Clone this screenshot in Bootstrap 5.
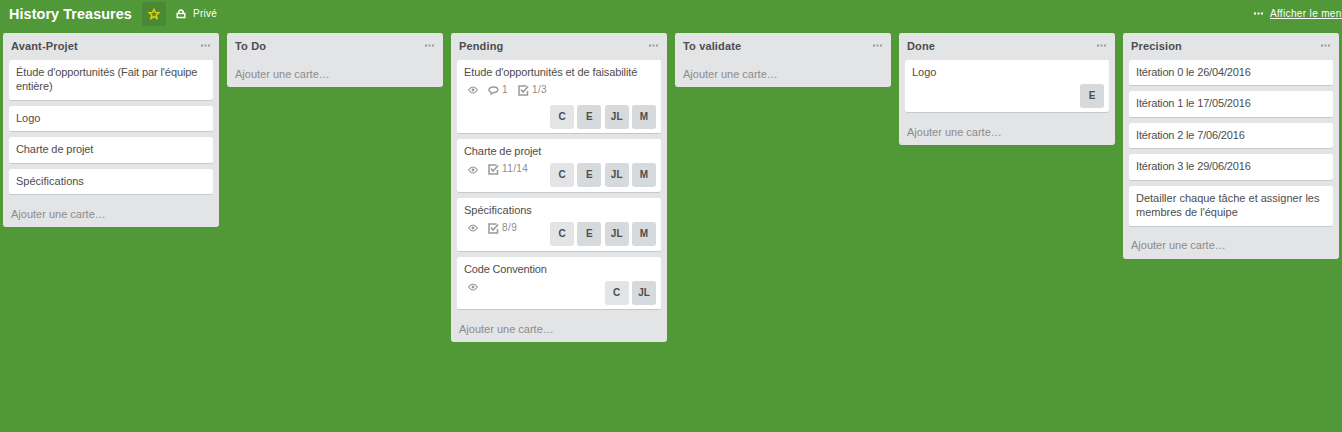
<!DOCTYPE html>
<html lang="fr">
<head>
<meta charset="utf-8">
<meta name="viewport" content="width=device-width, initial-scale=1">
<title>History Treasures</title>
<link href="https://cdn.jsdelivr.net/npm/bootstrap@5.3.0/dist/css/bootstrap.min.css" rel="stylesheet">
<style>
body{height:100vh;background:#519839;color:#4d4d4d;font:11px/14.4px "Liberation Sans",Arial,sans-serif}
svg{display:block;flex:none}
.board-header{height:27px;padding-left:9px;font-size:10px;color:#fff}
.board-title{font-size:14.4px;line-height:20px;letter-spacing:.08px;width:123px}
.star-btn{width:24px;height:24px;background:#498933;border-radius:2px;margin:0 10px}
.private{margin-left:7px;padding-top:1px;letter-spacing:.25px}
.menu-link{margin-right:-5.6px;gap:7px;letter-spacing:.35px;padding-top:1px}
.menu-link svg{margin-top:-1px}
.lists{gap:8px;padding:0 3px;margin-top:6px}
.board-list{width:216px;background:#e2e4e6;border-radius:2.4px}
.list-head{height:26.8px;padding:0 9px 0 8px;color:#4d4d4d}
.list-head h2{font-size:11px;line-height:14px;letter-spacing:.15px}
.list-head svg{margin-top:-2px;color:#999}
.list-cards{padding:0 6px;gap:5.1px}
.task{background:#fff;border-radius:2.4px;border-bottom:1px solid #c6c8ca;padding:5.2px 5px 5.8px 7px;letter-spacing:-.1px}
.task.loose{letter-spacing:0}
.task.tight{letter-spacing:-.16px}
.add-card{color:#8c8c8c;padding:11.9px 8px 5.7px}
.board-list.blank .add-card{padding-top:7.3px}
.task.people{padding-bottom:4.7px}
.info{height:28.4px;padding-left:4px}
.info .members{padding-top:4.5px}
.info.stacked{height:48.9px}
.info.stacked .members{padding-top:7.6px}
.marks{height:14px;margin-top:4px;color:#8c8c8c;font-size:10px;gap:10px;letter-spacing:.4px}
.marks span{gap:3px}
.members{gap:3.3px;letter-spacing:0}
.member{width:24px;height:24px;border-radius:2.4px;background:#d6dadc;font-weight:700;font-size:10px;color:#4d4d4d;padding-top:1px}
.member.pale{background:#e2e4e6}
</style>
</head>
<body class="overflow-hidden">
<svg width="0" height="0" class="position-absolute">
<symbol id="eye" viewBox="0 0 10 8"><path d="M.6 4Q5-2 9.400 4Q5 10 .6 4Z" fill="none" stroke="#999" stroke-width="1.200"/><circle cx="5" cy="4" r="1.400" fill="#999"/></symbol>
<symbol id="talk" viewBox="0 0 11 9"><path d="M3.200 6.300C-.6 5 .6 1 5.500 1C11.300 1 11.300 6.500 5.700 6.500L3 8.200Z" fill="none" stroke="#999" stroke-width="1.400" stroke-linejoin="round"/></symbol>
<symbol id="check" viewBox="0 0 11 11"><path d="M8.500 1H1V10H9.500V6M3 4.500L5 7L10.200 1.600" fill="none" stroke="#999" stroke-width="1.500"/></symbol>
<symbol id="dots" viewBox="0 0 9 3"><path d="M0 .5H2V2.500H0ZM3.500 .5H5.500V2.500H3.500ZM7 .5H9V2.500H7Z" fill="currentColor"/></symbol>
</svg>
<header class="board-header d-flex align-items-center">
<h1 class="board-title fw-bold m-0 text-nowrap">History Treasures</h1>
<div class="star-btn d-flex align-items-center justify-content-center"><svg width="12" height="12" viewBox="0 0 12 12"><path d="M6 1.500L7.400 4.400L10.800 4.700L8.200 7L9 10.400L6 8.600L3 10.400L3.800 7L1.200 4.700L4.600 4.400Z" fill="none" stroke="#e6d00d" stroke-width="1.500"/></svg></div>
<svg width="10" height="10" viewBox="0 0 10 10"><path d="M1.200 4.500H8.800V8.500H1.200ZM2.600 4.500Q2.600 1 5 1T7.400 4.500" fill="none" stroke="#fff" stroke-width="1.400"/></svg>
<span class="private">Privé</span>
<div class="menu-link ms-auto d-flex align-items-center text-nowrap"><svg width="9" height="3"><use href="#dots"/></svg><span class="text-decoration-underline">Afficher le menu</span></div>
</header>
<main class="lists d-flex align-items-start" id="board"></main>
<script>
const lists = [
 ["Avant-Projet", [["Étude d'opportunités (Fait par l'équipe entière)"],["Logo"],["Charte de projet"],["Spécifications"]]],
 ["To Do", []],
 ["Pending", [
  ["Etude d'opportunités et de faisabilité", {talk:"1", check:"1/3"}, ["C","E","JL","M"], true],
  ["Charte de projet", {check:"11/14"}, ["C","E","JL","M"]],
  ["Spécifications", {check:"8/9"}, ["C","E","JL","M"]],
  ["Code Convention", {}, ["C","JL"]]]],
 ["To validate", []],
 ["Done", [["Logo", null, ["E"]]]],
 ["Precision", [["Itération 0 le 26/04/2016"],["Itération 1 le 17/05/2016"],["Itération 2 le 7/06/2016"],["Itération 3 le 29/06/2016"],["Detailler chaque tâche et assigner les membres de l'équipe"]]]
];
const icon = (n,w,h) => `<svg width="${w}" height="${h}"><use href="#${n}"/></svg>`;
const fit = t => /^(Spéc|Logo|Detail)/.test(t) ? " loose" : /^(Itér|Code)/.test(t) ? " tight" : "";
const marks = m => m ? `<div class="marks d-flex align-items-center">${icon("eye",10,8)}${m.talk?`<span class="d-flex align-items-center">${icon("talk",11,9)}${m.talk}</span>`:""}${m.check?`<span class="d-flex align-items-center">${icon("check",11,11)}${m.check}</span>`:""}</div>` : "";
const team = p => `<div class="members d-flex ms-auto">${p.map(x=>`<span class="member d-flex align-items-center justify-content-center${x==="C"?" pale":""}">${x}</span>`).join("")}</div>`;
const card = ([t,m,p,stacked]) => `<article class="task${p?" people":""}${fit(t)}"><div>${t}</div>${p?`<div class="info d-flex ${stacked?"stacked flex-column":"align-items-start"}">${marks(m)}${team(p)}</div>`:""}</article>`;
document.getElementById("board").innerHTML = lists.map(([n,c])=>`<section class="board-list flex-shrink-0${c.length?"":" blank"}"><div class="list-head d-flex align-items-center justify-content-between"><h2 class="m-0 fw-bold">${n}</h2>${icon("dots",9,3)}</div><div class="list-cards d-flex flex-column">${c.map(card).join("")}</div><div class="add-card">Ajouter une carte…</div></section>`).join("");
</script>
<script src="https://cdn.jsdelivr.net/npm/bootstrap@5.3.0/dist/js/bootstrap.bundle.min.js"></script>
</body>
</html>
